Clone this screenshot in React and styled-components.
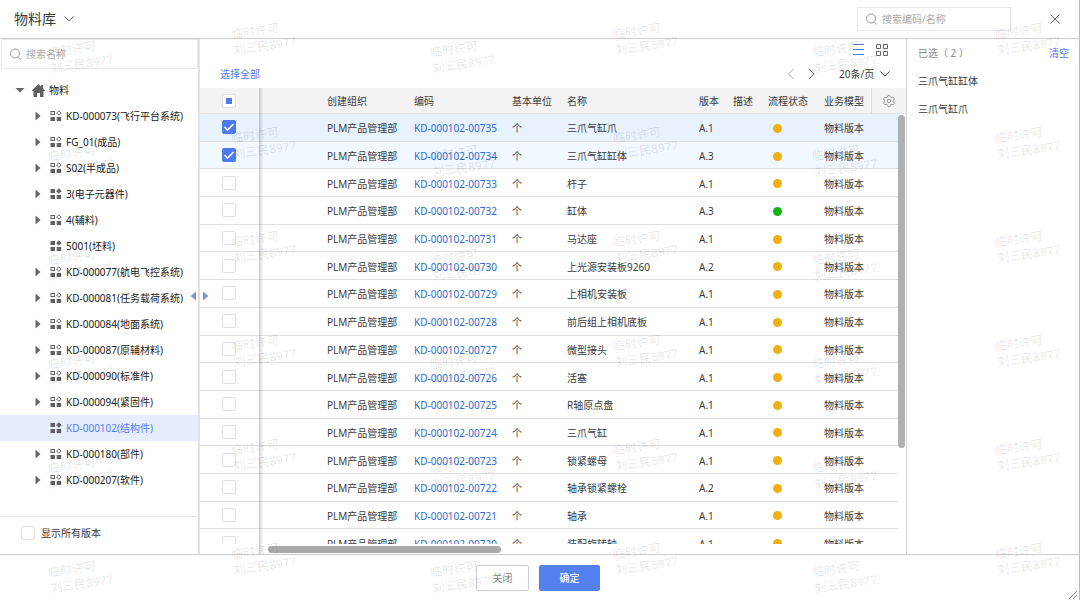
import React, { useState } from "react";
import styled, { createGlobalStyle } from "styled-components";
import { Settings } from "lucide-react";

const GlobalStyle = createGlobalStyle`
  * {
    box-sizing: border-box;
  }
  body {
    margin: 0;
    background: #fff;
    color: #3a3a3a;
    font-family: "Noto Sans", "Noto Sans CJK SC", sans-serif;
    font-size: 10px;
    line-height: 16px;
  }
  button, input, select {
    font: inherit;
    color: inherit;
  }
`;

const Dialog = styled.div`
  position: relative;
  display: flex;
  flex-direction: column;
  height: 100vh;
  border-right: 1px solid #bbb;
  overflow: hidden;
`;

const Header = styled.header`
  display: flex;
  align-items: center;
  flex: none;
  height: 39px;
  padding: 0 18px 0 14px;
  border-bottom: 1px solid #ccc;
`;

const Title = styled.h1`
  margin: 0 8px 0 0;
  font-size: 14px;
  font-weight: 400;
  line-height: 20px;
`;

const IconButton = styled.button`
  display: flex;
  align-items: center;
  justify-content: center;
  padding: 0;
  border: 0;
  background: none;
  color: ${props => props.$color || "#666"};
  cursor: pointer;
`;

const SearchBox = styled.label`
  display: flex;
  align-items: center;
  flex: none;
  gap: 4px;
  width: ${props => props.$width || "auto"};
  height: ${props => props.$height || "24px"};
  margin: ${props => props.$margin || "0"};
  padding: 0 7px;
  border: 1px solid #e8e8e8;
  color: #999;
`;

const SearchInput = styled.input`
  flex: 1;
  min-width: 0;
  padding: 0;
  border: 0;
  outline: 0;
  background: none;
  &::placeholder {
    color: #aaa;
    opacity: 1;
  }
`;

const Body = styled.div`
  display: flex;
  flex: 1;
  min-height: 0;
`;

const Sidebar = styled.aside`
  display: flex;
  flex-direction: column;
  flex: none;
  width: 200px;
  border-right: 2px solid #e2e2e2;
`;

const Tree = styled.ul`
  flex: 1;
  margin: 0;
  padding: 8px 0 0;
  list-style: none;
  overflow: hidden;
`;

const TreeItem = styled.li`
  display: flex;
  align-items: center;
  height: 26px;
  padding-left: ${props => props.$root ? "14px" : "32px"};
  background: ${props => props.$active ? "#e4eeff" : "none"};
  color: ${props => props.$active ? "#5580f0" : "#222"};
  white-space: nowrap;
`;

const Toggle = styled.span`
  display: flex;
  justify-content: center;
  width: 12px;
  margin-right: 6px;
  color: #666;
`;

const NodeIcon = styled.span`
  display: flex;
  margin-right: 4px;
  color: #606060;
`;

const SidebarFooter = styled.label`
  display: flex;
  align-items: center;
  gap: 6px;
  height: 38px;
  padding: 0 0 6px 21px;
  border-top: 1px solid #e8e8e8;
`;

const Checkbox = styled.input`
  appearance: none;
  display: block;
  flex: none;
  width: 14px;
  height: 14px;
  margin: 0;
  border: 1px solid #e0e0e0;
  border-radius: 2px;
  background: #fff center / 12px 12px no-repeat;
  &:checked {
    border-color: #4d7bee;
    background-color: #4d7bee;
    background-image: url("data:image/svg+xml,%3Csvg xmlns='http://www.w3.org/2000/svg' viewBox='0 0 12 12' fill='none' stroke='white' stroke-width='1.6'%3E%3Cpath d='M1.500 6l3 3 6-6'/%3E%3C/svg%3E");
  }
  &:indeterminate {
    background-image: linear-gradient(#4d7bee, #4d7bee);
    background-size: 6px 6px;
  }
`;

const Main = styled.main`
  position: relative;
  display: flex;
  flex-direction: column;
  flex: 1;
  min-width: 0;
`;

const Toolbar = styled.div`
  display: flex;
  justify-content: space-between;
  align-items: flex-end;
  flex: none;
  height: 49px;
  padding: 4px 16px 6px 20px;
`;

const TextButton = styled.button`
  padding: 0;
  border: 0;
  background: none;
  color: #4d7bee;
  cursor: pointer;
`;

const ToolGroup = styled.div`
  display: flex;
  flex-direction: column;
  align-items: flex-end;
  gap: 10px;
`;

const ToolRow = styled.div`
  display: flex;
  align-items: center;
  gap: 10px;
  padding-right: ${props => props.$inset || "0"};
`;

const PageSize = styled.span`
  display: flex;
  align-items: center;
  gap: 5px;
  margin-left: 12px;
`;

const PageSelect = styled.select`
  appearance: none;
  padding: 0;
  border: 0;
  background: none;
`;

const TableArea = styled.div`
  position: relative;
  flex: 1;
  min-height: 0;
  padding-bottom: 10px;
`;

const TableClip = styled.div`
  height: 100%;
  overflow: hidden;
`;

const Table = styled.table`
  width: 100%;
  height: 469px;
  table-layout: fixed;
  border-collapse: separate;
  border-spacing: 0;
`;

const Th = styled.th`
  height: 26px;
  padding: 0 0 0 ${props => props.$pad || "8px"};
  border-bottom: 1px solid #e8e8e8;
  border-left: ${props => props.$divider ? "1px solid #ddd" : "0"};
  background: #f3f3f3;
  font-weight: 400;
  text-align: left;
  white-space: nowrap;
`;

const Tr = styled.tr`
  background: ${props => props.$bg || "#fff"};
`;

const Td = styled.td`
  padding: 2px 0 0 ${props => props.$pad || "8px"};
  border-bottom: 1px solid #e0e0e0;
  white-space: nowrap;
`;

const TickCell = styled(Td)`
  padding: 0 0 0 22px;
`;

const CodeLink = styled.a`
  color: #2f6bd0;
  text-decoration: none;
`;

const Dot = styled.span`
  display: block;
  width: 9px;
  height: 9px;
  border-radius: 50%;
  background: ${props => props.$done ? "#0fb80f" : "#f0b010"};
`;

/* edge of the frozen tick column */
const FrozenEdge = styled.div`
  position: absolute;
  top: 0;
  bottom: 0;
  left: 59px;
  width: 4px;
  background: linear-gradient(to right, rgba(0, 0, 0, 0.2), rgba(0, 0, 0, 0));
`;

const VerticalTrack = styled.div`
  position: absolute;
  top: 26px;
  right: 0;
  bottom: 0;
  width: 8px;
  background: #fff;
`;

const VerticalThumb = styled.div`
  width: 7px;
  height: 333px;
  margin-top: 1px;
  border-radius: 4px;
  background: #b0b0b0;
`;

const HorizontalThumb = styled.div`
  position: absolute;
  left: 68px;
  bottom: 1px;
  width: 233px;
  height: 7px;
  border-radius: 4px;
  background: #aaa;
`;

const Splitter = styled.div`
  position: absolute;
  top: 252px;
  left: -12px;
  display: flex;
  justify-content: space-between;
  width: 22px;
  color: #8496c4;
`;

const Selected = styled.aside`
  flex: none;
  width: 173px;
  padding: 6px 10px 0 11px;
  border-left: 1px solid #d4d4d4;
`;

const SelectedHead = styled.div`
  display: flex;
  justify-content: space-between;
  color: #888;
`;

const SelectedList = styled.ul`
  display: grid;
  gap: 12px;
  margin: 12px 0 0;
  padding: 0;
  list-style: none;
`;

const Footer = styled.footer`
  display: flex;
  justify-content: center;
  align-items: center;
  gap: 10px;
  flex: none;
  height: 46px;
  padding-right: 3px;
  border-top: 1px solid #ccc;
`;

const FooterButton = styled.button`
  height: 26px;
  width: ${props => props.$primary ? "61px" : "53px"};
  padding: 0;
  border: 1px solid ${props => props.$primary ? "#5580f0" : "#ccc"};
  border-radius: 2px;
  background: ${props => props.$primary ? "#5580f0" : "#fff"};
  color: ${props => props.$primary ? "#fff" : "#888"};
  font-weight: ${props => props.$primary ? 500 : 400};
`;

const ResizeGrip = styled.svg`
  position: absolute;
  right: 1px;
  bottom: 0;
`;

const WatermarkLayer = styled.div`
  position: absolute;
  inset: 0;
  display: grid;
  grid-template-columns: repeat(3, 382px);
  grid-auto-rows: 104px;
  padding: ${props => props.$offset};
  overflow: hidden;
  pointer-events: none;
`;

const Mark = styled.div`
  width: 66px;
  height: 32px;
  color: rgba(0, 0, 0, 0.11);
  font-size: 12px;
  white-space: nowrap;
  transform: rotate(-8deg);
`;

const nodes = [
  { name: "KD-000073(飞行平台系统)", open: true },
  { name: "FG_01(成品)", open: true },
  { name: "S02(半成品)", open: true },
  { name: "3(电子元器件)", open: true, solid: true },
  { name: "4(辅料)", open: true },
  { name: "5001(坯料)", solid: true },
  { name: "KD-000077(航电飞控系统)", open: true },
  { name: "KD-000081(任务载荷系统)", open: true },
  { name: "KD-000084(地面系统)", open: true },
  { name: "KD-000087(原辅材料)", open: true },
  { name: "KD-000090(标准件)", open: true },
  { name: "KD-000094(紧固件)", open: true },
  { name: "KD-000102(结构件)", solid: true, active: true },
  { name: "KD-000180(部件)", open: true },
  { name: "KD-000207(软件)", open: true },
];

const rows = [
  ["00735", "三爪气缸爪", "A.1"],
  ["00734", "三爪气缸缸体", "A.3"],
  ["00733", "杆子", "A.1"],
  ["00732", "缸体", "A.3"],
  ["00731", "马达座", "A.1"],
  ["00730", "上光源安装板9260", "A.2"],
  ["00729", "上相机安装板", "A.1"],
  ["00728", "前后组上相机底板", "A.1"],
  ["00727", "微型接头", "A.1"],
  ["00726", "活塞", "A.1"],
  ["00725", "R轴原点盘", "A.1"],
  ["00724", "三爪气缸", "A.1"],
  ["00723", "锁紧螺母", "A.1"],
  ["00722", "轴承锁紧螺栓", "A.2"],
  ["00721", "轴承", "A.1"],
  ["00720", "装配旋转轴", "A.1"],
];

const rowColors = ["#e7f2fe", "#f1f8ff"];

const SearchIcon = () => (
  <svg width="13" height="13" viewBox="0 0 13 13" fill="none" stroke="currentColor">
    <circle cx="6" cy="5.5" r="4.5" />
    <path d="M9.200 9l2.300 2.500" />
  </svg>
);

const Chevron = ({ d = "M.5 2.500L5 7l4.500-4.500" }) => (
  <svg width="10" height="10" viewBox="0 0 10 10" fill="none" stroke="currentColor">
    <path d={d} />
  </svg>
);

const Triangle = ({ d }) => (
  <svg width="10" height="10" viewBox="0 0 10 10" fill="currentColor">
    <path d={d} />
  </svg>
);

const HomeIcon = () => (
  <svg width="13" height="13" viewBox="0 0 13 13" fill="currentColor">
    <path d="M6.500 0L9 2.400V1h2v3.300L13 6.500V7h-1.500v6H8V9H5v4H1.500V7H0v-.5z" />
  </svg>
);

const GroupIcon = ({ solid }) => (
  <svg width="12" height="12" viewBox="0 0 12 12" fill="currentColor" stroke="currentColor">
    <rect x="1" y="1.500" width="3.500" height="3" fill={solid ? "currentColor" : "none"} />
    <path d="M8.900 .8l2.300 2.200-2.300 2.300L6.600 3z" fill={solid ? "currentColor" : "none"} />
    <rect x="1" y="7.500" width="3.500" height="3" />
    <rect x="7.200" y="7.500" width="3.500" height="3" />
  </svg>
);

const App = () => {
  const [checked, setChecked] = useState(["00735", "00734"]);

  const handleToggle = (code) => {
    setChecked(checked.includes(code) ? checked.filter(c => c !== code) : [...checked, code]);
  };

  const picked = rows.filter(r => checked.includes(r[0])).reverse();

  return (
    <>
      <GlobalStyle />
      <Dialog>
        <Header>
          <Title>物料库</Title>
          <IconButton aria-label="切换"><Chevron /></IconButton>
          <SearchBox $width="154px" $margin="0 38px 0 auto">
            <SearchIcon />
            <SearchInput aria-label="搜索编码/名称" placeholder="搜索编码/名称" />
          </SearchBox>
          <IconButton aria-label="关闭窗口">
            <svg width="12" height="12" viewBox="0 0 12 12" stroke="currentColor" fill="none">
              <path d="M1.500 1.500l9 9M10.500 1.500l-9 9" />
            </svg>
          </IconButton>
        </Header>

        <Body>
          <Sidebar>
            <SearchBox $height="30px" $margin="0 0 0 1px">
              <SearchIcon />
              <SearchInput aria-label="搜索名称" placeholder="搜索名称" />
            </SearchBox>
            <Tree>
              <TreeItem $root>
                <Toggle><Triangle d="M.5 3h9L5 7.500z" /></Toggle>
                <NodeIcon><HomeIcon /></NodeIcon>
                物料
              </TreeItem>
              {nodes.map(n => (
                <TreeItem key={n.name} $active={n.active}>
                  <Toggle>{n.open && <Triangle d="M2.500 .5L7.500 5l-5 4.500z" />}</Toggle>
                  <NodeIcon><GroupIcon solid={n.solid} /></NodeIcon>
                  {n.name}
                </TreeItem>
              ))}
            </Tree>
            <SidebarFooter>
              <Checkbox type="checkbox" />
              显示所有版本
            </SidebarFooter>
          </Sidebar>

          <Main>
            <Toolbar>
              <TextButton>选择全部</TextButton>
              <ToolGroup>
                <ToolRow $inset="2px">
                  <IconButton $color="#4d7bee" aria-label="列表">
                    <svg width="13" height="13" viewBox="0 0 13 13" stroke="currentColor">
                      <path d="M1 1.500h11M1 6.500h11M1 11.500h11" />
                    </svg>
                  </IconButton>
                  <IconButton aria-label="卡片">
                    <svg width="13" height="13" viewBox="0 0 13 13" stroke="currentColor" fill="none">
                      <path d="M1.500 1.500h4v4h-4zM8.500 1.500h4v4h-4zM1.500 8.500h4v4h-4zM8.500 8.500h4v4h-4z" />
                    </svg>
                  </IconButton>
                </ToolRow>
                <ToolRow>
                  <IconButton $color="#aaa" aria-label="上一页"><Chevron d="M6.500 0L1.500 5l5 5" /></IconButton>
                  <IconButton aria-label="下一页"><Chevron d="M2 0l5 5-5 5" /></IconButton>
                  <PageSize>
                    <PageSelect aria-label="每页条数">
                      <option>20条/页</option>
                    </PageSelect>
                    <Chevron />
                  </PageSize>
                </ToolRow>
              </ToolGroup>
            </Toolbar>

            <TableArea>
              <TableClip>
                <Table>
                  <colgroup>
                    <col width="60" />
                    <col width="59" />
                    <col width="87" />
                    <col width="98" />
                    <col width="55" />
                    <col />
                    <col width="34" />
                    <col width="35" />
                    <col width="56" />
                    <col width="55" />
                    <col width="35" />
                  </colgroup>
                  <thead>
                    <tr>
                      <Th $pad="22px">
                        <Checkbox
                          type="checkbox"
                          aria-label="全选"
                          ref={el => { if (el) el.indeterminate = checked.length > 0; }}
                        />
                      </Th>
                      <Th />
                      <Th>创建组织</Th>
                      <Th>编码</Th>
                      <Th>基本单位</Th>
                      <Th>名称</Th>
                      <Th>版本</Th>
                      <Th>描述</Th>
                      <Th>流程状态</Th>
                      <Th>业务模型</Th>
                      <Th $pad="10px" $divider>
                        <IconButton $color="#888" aria-label="列设置">
                          <Settings size={14} strokeWidth={1.5} />
                        </IconButton>
                      </Th>
                    </tr>
                  </thead>
                  <tbody>
                    {rows.map(([code, name, version], i) => (
                      <Tr key={code} $bg={checked.includes(code) ? rowColors[i] || rowColors[1] : "#fff"}>
                        <TickCell>
                          <Checkbox
                            type="checkbox"
                            aria-label={name}
                            checked={checked.includes(code)}
                            onChange={() => handleToggle(code)}
                          />
                        </TickCell>
                        <Td />
                        <Td>PLM产品管理部</Td>
                        <Td><CodeLink href="#">KD-000102-{code}</CodeLink></Td>
                        <Td>个</Td>
                        <Td>{name}</Td>
                        <Td>{version}</Td>
                        <Td />
                        <Td $pad="13px"><Dot $done={code === "00732"} /></Td>
                        <Td>物料版本</Td>
                        <Td />
                      </Tr>
                    ))}
                  </tbody>
                </Table>
              </TableClip>
              <FrozenEdge />
              <VerticalTrack><VerticalThumb /></VerticalTrack>
              <HorizontalThumb />
            </TableArea>
            <Splitter>
              <Triangle d="M8 .5v9L2.500 5z" />
              <Triangle d="M3 .5v9L8.500 5z" />
            </Splitter>
          </Main>

          <Selected>
            <SelectedHead>
              <span>已选（ {picked.length} ）</span>
              <TextButton onClick={() => setChecked([])}>清空</TextButton>
            </SelectedHead>
            <SelectedList>
              {picked.map(r => <li key={r[0]}>{r[1]}</li>)}
            </SelectedList>
          </Selected>
        </Body>

        <Footer>
          <FooterButton>关闭</FooterButton>
          <FooterButton $primary>确定</FooterButton>
        </Footer>

        <ResizeGrip width="10" height="10" viewBox="0 0 10 10" stroke="#888">
          <path d="M1 9l8-8M5 9l4-4" />
        </ResizeGrip>
        {["40px 0 0 49px", "22px 0 0 232px"].map(offset => (
          <WatermarkLayer key={offset} $offset={offset} aria-hidden="true">
            {Array.from({ length: 18 }, (_, i) => (
              <Mark key={i}>临时许可<br />刘三民8977</Mark>
            ))}
          </WatermarkLayer>
        ))}
      </Dialog>
    </>
  );
};

export default App;
